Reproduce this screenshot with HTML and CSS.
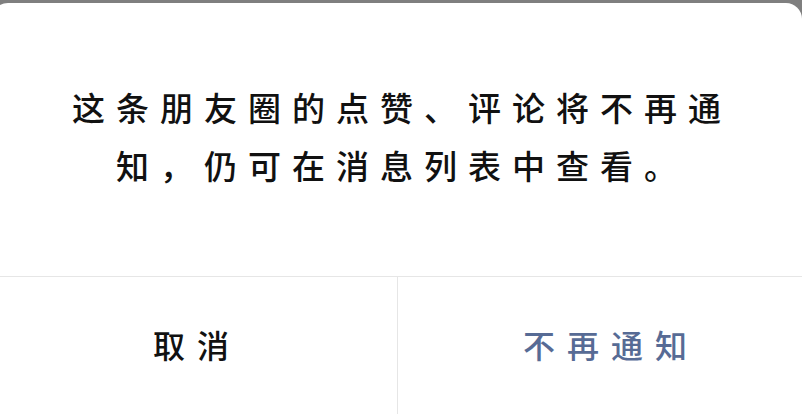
FILE: index.html
```html
<!DOCTYPE html>
<html lang="zh-CN">
<head>
    <meta charset="UTF-8">
    <meta name="viewport" content="width=device-width, initial-scale=1.0">
    <title>不再通知</title>
    <link rel="stylesheet" href="styles.css">
</head>
<body>
    <!-- Confirm Dialog -->
    <div class="dialog">
        <div class="dialog-body">
            <p class="message">这条朋友圈的点赞、评论将不再通知，仍可在消息列表中查看。</p>
        </div>
        <div class="dialog-actions">
            <button class="action" type="button">取消</button>
            <button class="action primary" type="button">不再通知</button>
        </div>
    </div>
</body>
</html>
```

FILE: styles.css
```css
/* Base Styles */
body {
    font-family: "Noto Sans CJK SC", "Noto Sans", sans-serif;
    background-color: #7f7f7f;
    color: #111;
    margin: 0;
    padding: 0;
    overflow: hidden;
}

/* Dialog */
.dialog {
    width: 810px;
    margin: 3px 0 0 -8px;
    background-color: #fff;
    border-radius: 16px 16px 0 0;
}

.dialog-body {
    height: 274px;
    display: flex;
    align-items: center;
    justify-content: center;
    padding: 0 65px 8px 75px;
    box-sizing: border-box;
    border-bottom: 1px solid #e6e6e6;
}

.message {
    margin: 0;
    font-size: 33px;
    font-weight: 500;
    line-height: 58px;
    letter-spacing: 11px;
    text-align: center;
}

/* Buttons */
.dialog-actions {
    display: grid;
    grid-template-columns: 405px 405px;
    height: 142px;
}

.action {
    font-family: inherit;
    font-size: 32px;
    font-weight: 500;
    letter-spacing: 12px;
    padding: 0 0 8px 5px;
    background: none;
    border: none;
    color: #111;
    cursor: pointer;
}

.action.primary {
    color: #576b95;
    border-left: 1px solid #e6e6e6;
    padding-left: 22px;
}
```
